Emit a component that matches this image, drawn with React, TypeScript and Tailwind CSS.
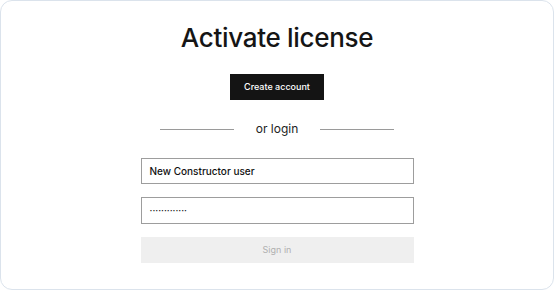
export default function App() {
  return (
    <div className="h-[291px] w-[554px] bg-white p-0 font-['Inter',sans-serif]">
      <div className="flex h-[290px] w-[554px] flex-col items-center rounded-[12px] border border-[#dbe3ec] bg-white">
        <h1 className="mt-[21px] text-[26px] font-medium leading-[32px] tracking-[-0.3px] text-[#151515]">
          Activate license
        </h1>
        <button className="mt-[20px] h-[26px] w-[94px] bg-[#141414] text-[9px] font-medium text-white">
          Create account
        </button>
        <div className="mt-[20px] flex w-[234px] items-center gap-[22px]">
          <div className="h-px flex-1 bg-[#9a9a9a]" />
          <span className="text-[12px] leading-[18px] text-[#222]">or login</span>
          <div className="h-px flex-1 bg-[#9a9a9a]" />
        </div>
        <div className="mt-[20px] flex w-[273px] flex-col gap-[13px]">
          <div className="flex h-[26px] items-center border border-[#9d9d9d] px-[8px] text-[10px] font-medium text-[#111]">
            New Constructor user
          </div>
          <div className="flex h-[27px] items-center border border-[#9d9d9d] px-[8px] text-[10px] text-[#111]">
            ·············
          </div>
          <button className="h-[26px] bg-[#efefef] text-[9px] text-[#b0b0b0]">
            Sign in
          </button>
        </div>
      </div>
    </div>
  );
}
